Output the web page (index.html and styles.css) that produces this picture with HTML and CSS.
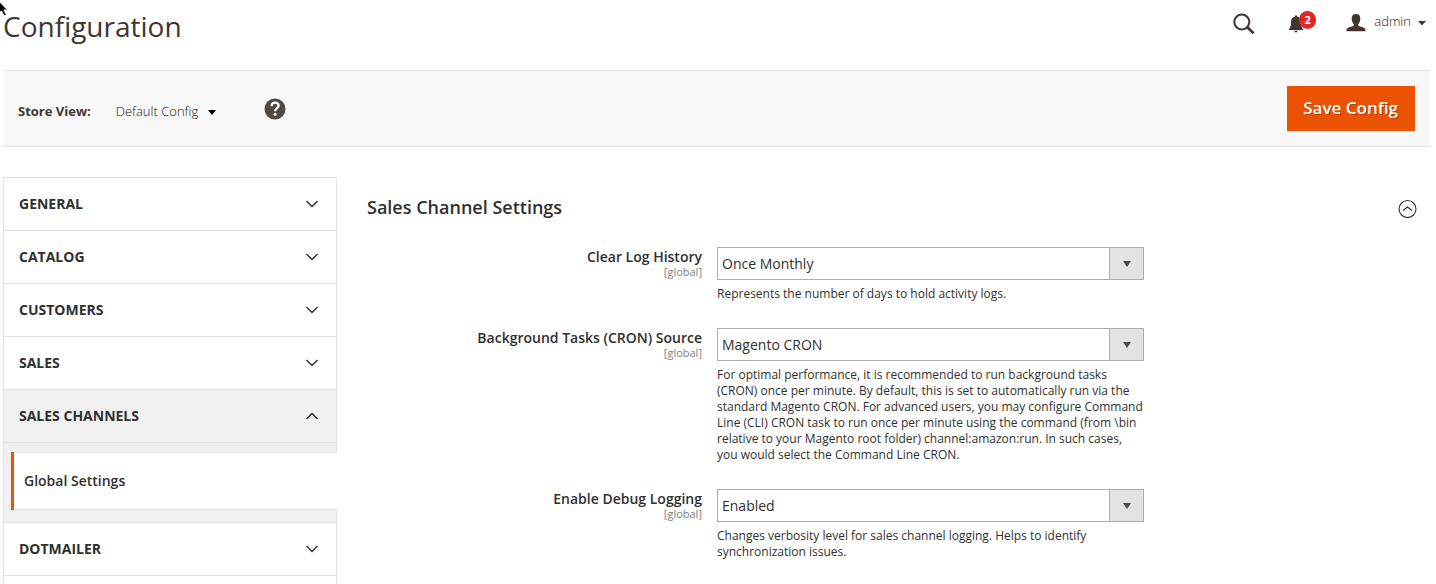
FILE: index.html
```html
<!DOCTYPE html>
<html lang="en">
<head>
<meta charset="utf-8">
<meta name="viewport" content="width=device-width, initial-scale=1">
<title>Configuration</title>
<link rel="stylesheet" href="styles.css">
</head>
<body>
<div class="page">
  <svg class="pointer" width="8" height="17" viewBox="0 0 8 17" aria-hidden="true"><path d="M-4 -2L7.500 10H4L6.500 15L4 16L1.500 11L-4 15Z" fill="#000" stroke="#fff"/></svg>
  <header class="header">
    <h1 class="title">Configuration</h1>
    <div class="tools">
      <button class="icon-button" type="button" aria-label="Search">
        <svg width="22" height="22" viewBox="0 0 22 22"><circle cx="8.800" cy="9" r="7.500" fill="none" stroke="#41362f" stroke-width="2"/><path d="M14 14L20.500 20.300" stroke="#41362f" stroke-width="2.800"/></svg>
      </button>
      <button class="icon-button notifications" type="button" aria-label="Notifications">
        <svg width="16" height="18" viewBox="0 0 16 18"><path d="M8 .5C9 .5 9.300 1 9.300 1.800C12 2.300 13 4.500 13 7C13 10.500 13.500 12.500 15.200 14.500V15H.8V14.500C2.500 12.500 3 10.500 3 7C3 4.500 4 2.300 6.700 1.800C6.700 1 7 .5 8 .5ZM6.300 15.800H9.700C9.500 17 8.800 17.400 8 17.400S6.500 17 6.300 15.800Z" fill="#41362f"/></svg>
        <span class="badge">2</span>
      </button>
      <button class="account" type="button">
        <svg width="20" height="18" viewBox="0 0 20 18"><path d="M10 0C13 0 14.300 1.800 14.300 4.500C14.300 7 13.500 8.700 12.300 10V11.500C12.800 12.700 19.500 13 19.500 15.800V17.300H.5V15.800C.5 13 7.200 12.700 7.700 11.500V10C6.500 8.700 5.700 7 5.700 4.500C5.700 1.800 7 0 10 0Z" fill="#41362f"/></svg>
        <span class="account-name">admin</span>
        <svg width="8" height="5" viewBox="0 0 8 5"><path d="M0 0H8L4 4.500Z" fill="#41362f"/></svg>
      </button>
    </div>
  </header>

  <div class="toolbar">
    <span class="store-label" id="store-label">Store View:</span>
    <button class="store-switch" type="button" aria-describedby="store-label">
      <span>Default Config</span>
      <svg width="8" height="8" viewBox="0 0 8 8"><path d="M0 3H8L4 8Z" fill="#000"/></svg>
    </button>
    <a class="help" href="#" aria-label="Help">
      <svg width="22" height="22" viewBox="0 0 22 22"><circle cx="11" cy="11" r="10.500" fill="#514943"/><path d="M7.600 8.200C7.600 6 9 4.700 11.100 4.700C13.300 4.700 14.600 6 14.600 7.700C14.600 10.100 11.100 10.200 11.100 13.200" fill="none" stroke="#fff" stroke-width="2.200"/><circle cx="11.100" cy="16.300" r="1.500" fill="#fff"/></svg>
    </a>
    <button class="save" type="button">Save Config</button>
  </div>

  <div class="columns">
    <nav class="sidebar" aria-label="Configuration sections">
      <button class="section" type="button">GENERAL<svg class="chevron" viewBox="0 0 14 8"><path d="M1.500 1L7 6.500L12.500 1"/></svg></button>
      <button class="section" type="button">CATALOG<svg class="chevron" viewBox="0 0 14 8"><path d="M1.500 1L7 6.500L12.500 1"/></svg></button>
      <button class="section" type="button">CUSTOMERS<svg class="chevron" viewBox="0 0 14 8"><path d="M1.500 1L7 6.500L12.500 1"/></svg></button>
      <button class="section" type="button">SALES<svg class="chevron" viewBox="0 0 14 8"><path d="M1.500 1L7 6.500L12.500 1"/></svg></button>
      <button class="section section-open" type="button" aria-expanded="true">SALES CHANNELS<svg class="chevron" viewBox="0 0 14 8"><path d="M1.500 7L7 1.500L12.500 7"/></svg></button>
      <div class="subsections">
        <a class="subsection" href="#" aria-current="page">Global Settings</a>
      </div>
      <button class="section" type="button">DOTMAILER<svg class="chevron" viewBox="0 0 14 8"><path d="M1.500 1L7 6.500L12.500 1"/></svg></button>
    </nav>

    <main class="content">
      <div class="content-head">
        <h2 class="content-title">Sales Channel Settings</h2>
        <button class="icon-button" type="button" aria-label="Collapse section">
          <svg width="20" height="22" viewBox="0 0 20 22" fill="none" stroke="#303030"><circle cx="10.500" cy="13" r="8.500" stroke-width="1.100"/><path d="M6 14.500L10.500 11L15 14.500" stroke-width="1.100"/></svg>
        </button>
      </div>

      <form class="fields">
        <div class="field">
          <label class="label" for="log-history"><span class="name">Clear Log History</span><span class="scope">[global]</span></label>
          <div class="control">
            <div class="select-box"><select class="select" id="log-history"><option>Once Monthly</option></select></div>
            <p class="note">Represents the number of days to hold activity logs.</p>
          </div>
        </div>
        <div class="field">
          <label class="label" for="cron-source"><span class="name">Background Tasks (CRON) Source</span><span class="scope">[global]</span></label>
          <div class="control">
            <div class="select-box"><select class="select" id="cron-source"><option>Magento CRON</option></select></div>
            <p class="note">For optimal performance, it is recommended to run background tasks (CRON) once per minute. By default, this is set to automatically run via the standard Magento CRON. For advanced users, you may configure Command Line (CLI) CRON task to run once per minute using the command (from \bin relative to your Magento root folder) channel:amazon:run. In such cases, you would select the Command Line CRON.</p>
          </div>
        </div>
        <div class="field">
          <label class="label" for="debug"><span class="name">Enable Debug Logging</span><span class="scope">[global]</span></label>
          <div class="control">
            <div class="select-box"><select class="select" id="debug"><option>Enabled</option></select></div>
            <p class="note">Changes verbosity level for sales channel logging. Helps to identify synchronization issues.</p>
          </div>
        </div>
      </form>
    </main>
  </div>
</div>
</body>
</html>
```
FILE: styles.css
```css
* { box-sizing: border-box; }

body {
  margin: 0;
  background: #fff;
  color: #303030;
  font-family: "Open Sans", "Noto Sans", sans-serif;
  font-size: 14px;
}

h1, h2, p { margin: 0; }
svg { display: block; flex: none; }

button {
  margin: 0;
  padding: 0;
  border: 0;
  background: none;
  color: inherit;
  font: inherit;
  cursor: pointer;
}

.page {
  display: flex;
  flex-direction: column;
  min-height: 100vh;
  padding: 0 6px 0 3px;
}

.pointer {
  position: absolute;
  top: 0;
  left: 0;
}

.header {
  display: flex;
  justify-content: space-between;
  align-items: flex-start;
  height: 70px;
  padding: 6px 4px 0 0;
  color: #41362f;
}

.title {
  font-size: 28px;
  font-weight: 400;
  line-height: 40px;
}

.tools {
  display: flex;
  align-items: center;
  height: 36px;
}

.icon-button { position: relative; }
.notifications { margin: 0 42px 0 33px; }

.badge {
  position: absolute;
  top: -4px;
  left: 11px;
  width: 17px;
  height: 18px;
  border-radius: 9px;
  background: #e22626;
  color: #fff;
  font-size: 11px;
  font-weight: 700;
  line-height: 18px;
}

.account {
  display: flex;
  align-items: center;
  gap: 7px;
  margin-bottom: 2px;
  color: #1a1410;
  font-size: 13px;
  font-weight: 300;
  line-height: 18px;
}

.account-name { padding: 0 0 4px 1px; }

.toolbar {
  display: flex;
  align-items: center;
  height: 77px;
  padding: 0 15px;
  border-top: 1px solid #e3e3e3;
  border-bottom: 1px solid #e3e3e3;
  background: #f8f8f8;
  color: #41362f;
  font-size: 13px;
}

.store-label {
  padding-top: 4px;
  font-weight: 700;
}

.store-switch {
  display: flex;
  align-items: center;
  gap: 10px;
  margin: 0 48px 0 25px;
  padding-top: 4px;
  color: #1a1410;
  font-weight: 300;
}

.save {
  height: 45px;
  margin-left: auto;
  padding: 0 17px 2px 16px;
  background: #eb5202;
  color: #fff;
  font-size: 17px;
  font-weight: 600;
  text-shadow: 1px 1px 0 rgba(0, 0, 0, .25);
}

.columns {
  display: flex;
  flex: 1;
  gap: 30px;
  padding-top: 30px;
}

.sidebar {
  flex: none;
  width: 334px;
  border: 1px solid #e3e3e3;
  border-bottom: 0;
}

.section {
  display: flex;
  justify-content: space-between;
  align-items: center;
  width: 100%;
  height: 53px;
  padding: 0 17px 1px 15px;
  border-bottom: 1px solid #e3e3e3;
  font-weight: 700;
}

.section-open { background: #f0f0f0; }

.chevron {
  width: 14px;
  height: 8px;
  fill: none;
  stroke: #303030;
  stroke-width: 1.5;
}

.subsections {
  padding: 9px 0 12px 7px;
  border-bottom: 1px solid #e3e3e3;
  background: #f0f0f0;
}

.subsection {
  position: relative;
  display: block;
  margin-right: -1px;
  padding: 0 13px;
  border: 1px solid #e3e3e3;
  border-width: 1px 0;
  background: #fff;
  color: #303030;
  font-weight: 600;
  line-height: 56px;
  text-decoration: none;
}

.subsection::before {
  content: "";
  position: absolute;
  top: -1px;
  bottom: -1px;
  left: 0;
  width: 3px;
  background: #eb5202;
}

.content {
  flex: 1;
  min-width: 0;
}

.content-head {
  display: flex;
  justify-content: space-between;
  align-items: center;
  height: 60px;
  margin-bottom: 10px;
  padding-right: 13px;
}

.content-title {
  font-size: 18px;
  font-weight: 600;
}

.fields {
  display: flex;
  flex-direction: column;
  gap: 26px;
}

.field {
  display: grid;
  grid-template-columns: 335fr 427fr 271fr;
  gap: 15px;
}

.label {
  display: flex;
  flex-direction: column;
  align-items: flex-end;
}

.name {
  font-weight: 600;
  line-height: 20px;
}

.scope {
  color: #808080;
  font-size: 11px;
  line-height: 10px;
}

.select-box { position: relative; }

.select {
  display: block;
  width: 100%;
  height: 33px;
  padding: 0 38px 0 4px;
  border: 1px solid #adadad;
  border-radius: 0;
  appearance: none;
  background: linear-gradient(#adadad, #adadad) right 33px top / 1px 100% no-repeat, linear-gradient(#e3e3e3, #e3e3e3) right top / 33px 100% no-repeat, #fff;
  color: #303030;
  font: inherit;
}

.select-box::after {
  content: "";
  position: absolute;
  top: 14px;
  right: 13px;
  border: 4px solid transparent;
  border-top: 6px solid #514943;
  border-bottom: 0;
  pointer-events: none;
}

.note {
  margin-top: 6px;
  font-size: 12px;
  line-height: 16px;
}
```
